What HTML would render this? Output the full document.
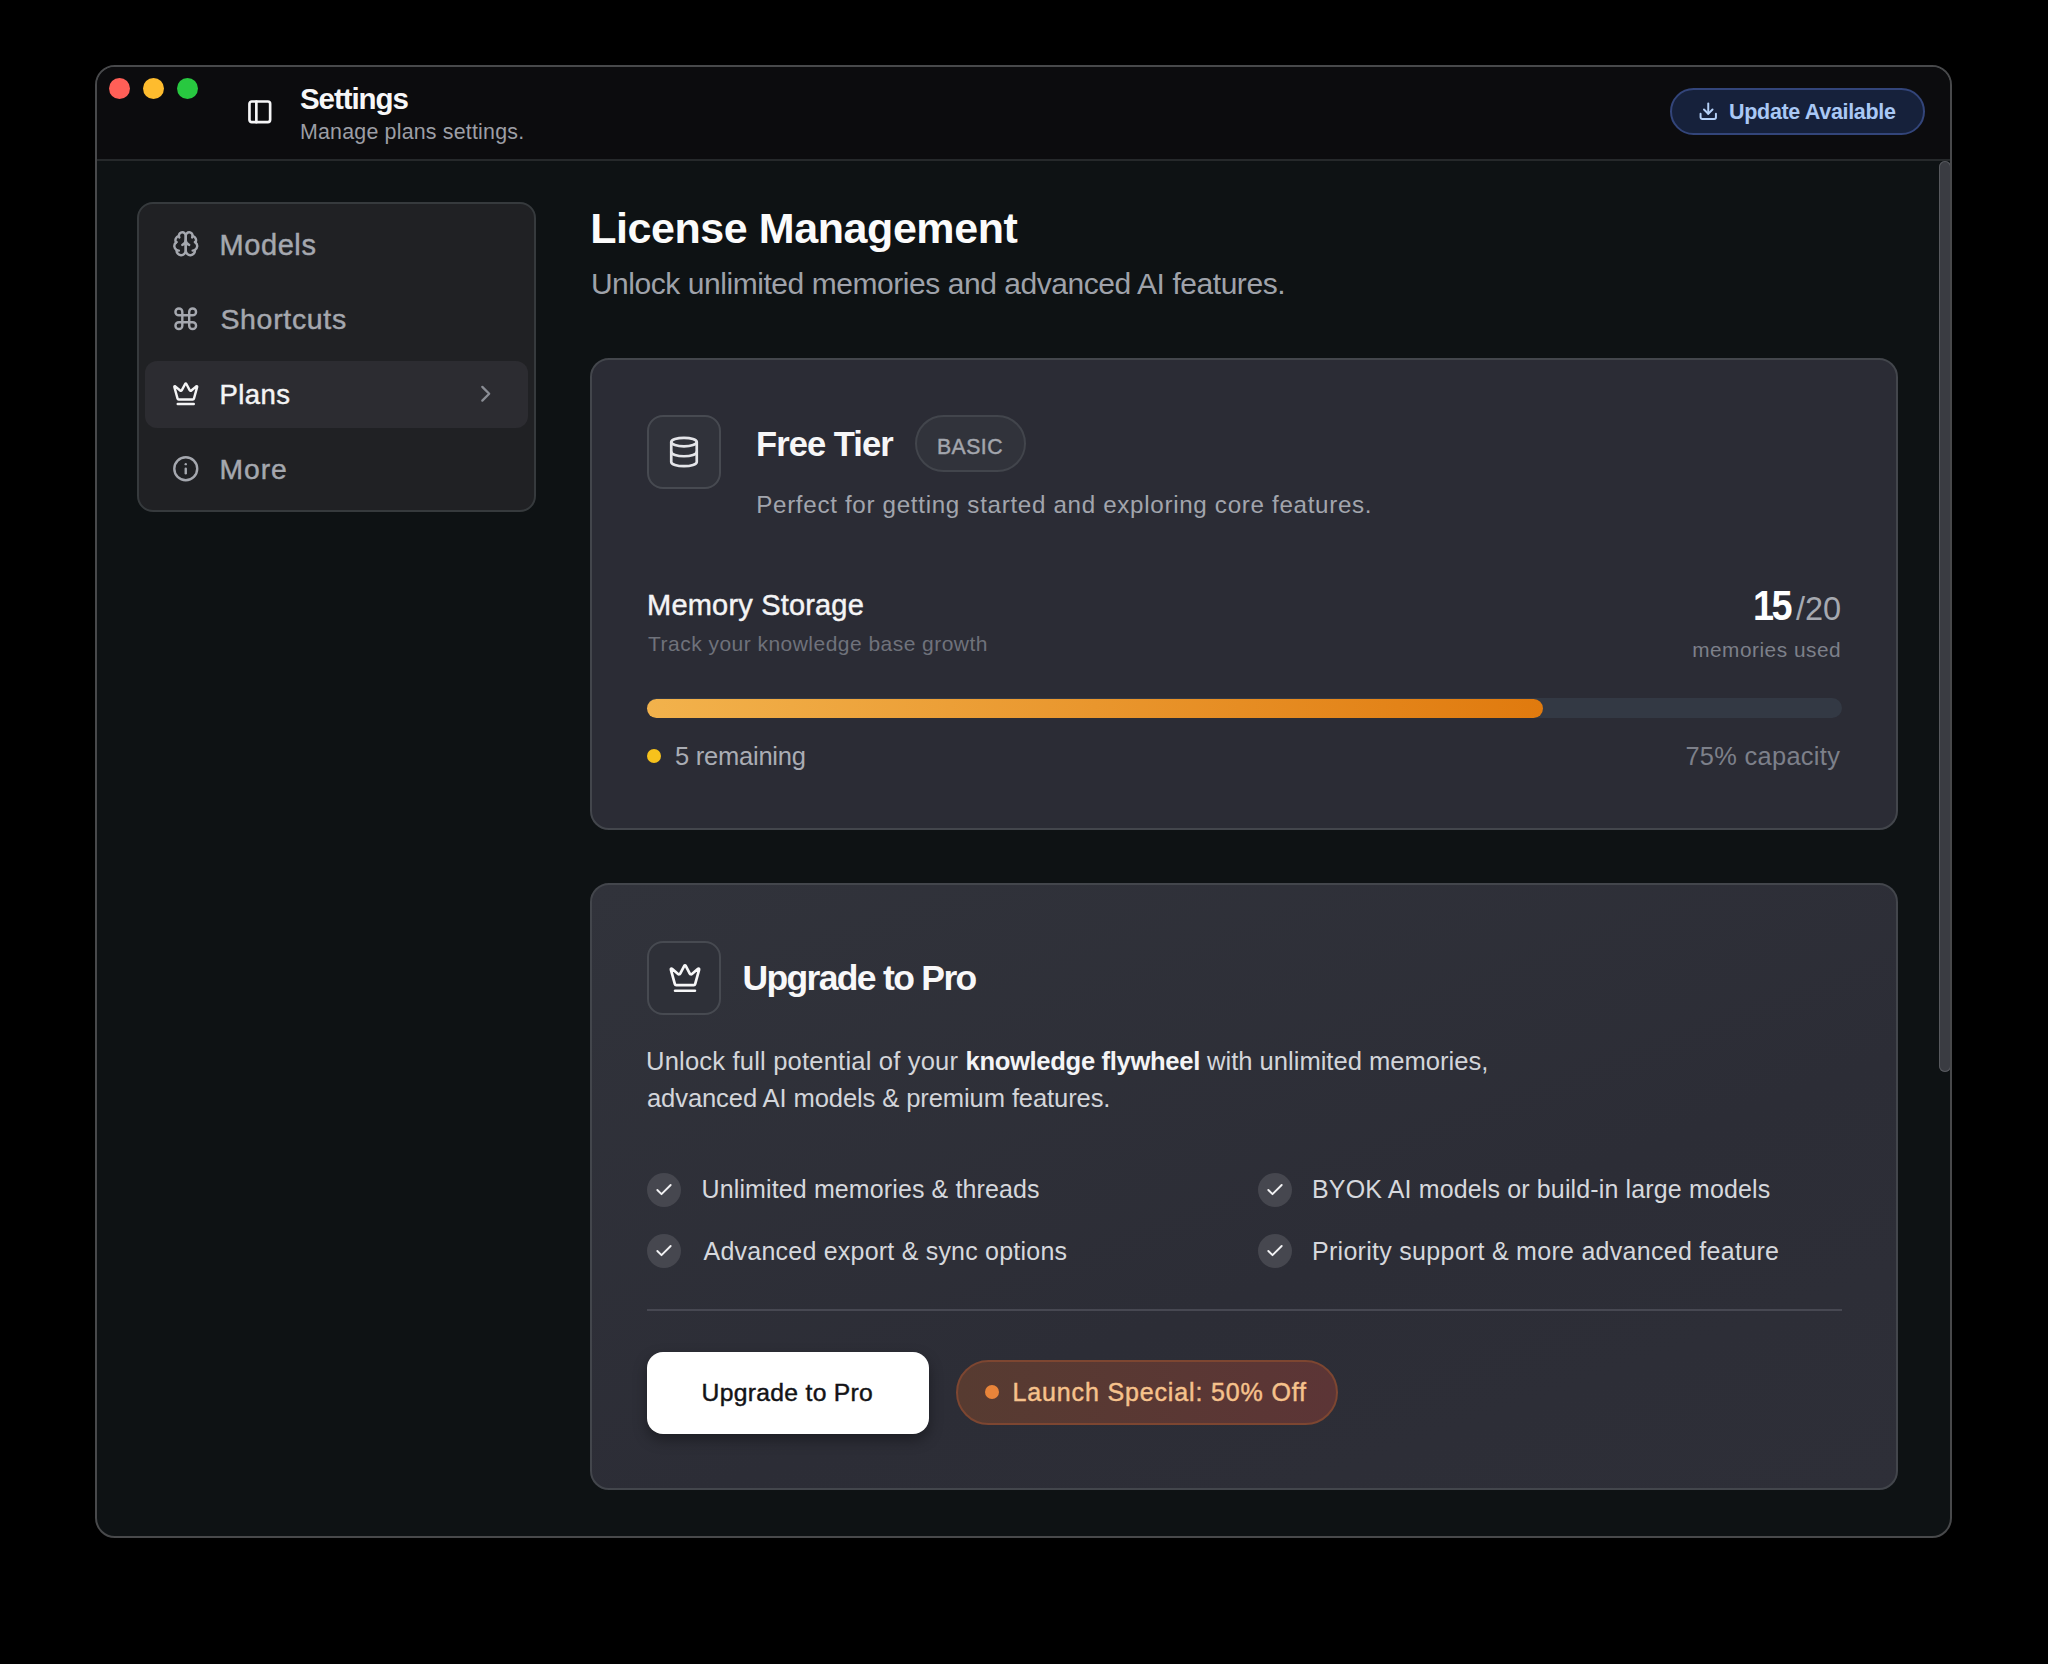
<!DOCTYPE html>
<html><head><meta charset="utf-8"><title>Settings</title><style>
html,body{margin:0;padding:0}
body{width:2048px;height:1664px;background:#000;position:relative;overflow:hidden;font-family:"Liberation Sans",sans-serif}
.t{position:absolute;line-height:1;white-space:nowrap}
.ic{position:absolute;overflow:visible}
.box{position:absolute;box-sizing:border-box}
.chk{position:absolute;width:34px;height:34px;border-radius:50%;background:#46474f}
.ui{}
</style></head>
<body>

<div class="ui">
<div class="box" style="left:95px;top:65px;width:1857px;height:1473px;border-radius:20px;border:2px solid #48494b;background:#0e1214;overflow:hidden">
  <div style="position:absolute;left:0;top:0;right:0;height:91.5px;background:#0c0c0e;border-bottom:2px solid #26292b"></div>
  <div style="position:absolute;left:1842px;top:94px;width:12px;height:911px;border-radius:6px;background:#3a3c42;box-shadow:inset 0 0 0 1px #56585d"></div>
</div>
<div class="box" style="left:108.9px;top:77.9px;width:21px;height:21px;border-radius:50%;background:#ff5f57"></div>
<div class="box" style="left:143px;top:77.9px;width:21px;height:21px;border-radius:50%;background:#febc2e"></div>
<div class="box" style="left:177px;top:77.9px;width:21px;height:21px;border-radius:50%;background:#28c840"></div>

<div class="box" style="left:1670px;top:88px;width:255px;height:47px;border-radius:24px;border:2px solid #33457a;background:#16213b"></div>

<div class="box" style="left:137px;top:201.5px;width:399px;height:310.5px;border-radius:16px;border:2px solid #363a3d;background:#202124"></div>
<div class="box" style="left:145px;top:360.5px;width:383px;height:67.5px;border-radius:12px;background:#2c2c31"></div>

<div class="box" style="left:590px;top:358px;width:1308px;height:472px;border-radius:19px;border:2px solid #43464c;background:#2b2c35"></div>
<div class="box" style="left:647px;top:415px;width:74px;height:74px;border-radius:16px;border:2px solid #474a51;background:#30323a"></div>
<div class="box" style="left:915px;top:415px;width:111px;height:57px;border-radius:29px;border:2px solid #42454c;background:#31333b"></div>
<div class="box" style="left:647px;top:698px;width:1195px;height:20px;border-radius:10px;background:#333944"></div>
<div class="box" style="left:647px;top:698.5px;width:896px;height:19px;border-radius:10px;background:linear-gradient(90deg,#f2b24c,#e07a0e)"></div>
<div class="box" style="left:646.7px;top:748.5px;width:14.6px;height:14.6px;border-radius:50%;background:#f7c21c"></div>

<div class="box" style="left:590px;top:883px;width:1308px;height:607px;border-radius:19px;border:2px solid #43464c;background:linear-gradient(160deg,#31333b 0%,#2c2d36 60%,#2e2f38 100%)"></div>
<div class="box" style="left:647px;top:940.5px;width:74px;height:74px;border-radius:16px;border:2px solid #474a51;background:#2e3038"></div>
<div class="box" style="left:647px;top:1309px;width:1195px;height:2px;background:#474852"></div>
<div class="box" style="left:647px;top:1352px;width:282px;height:82px;border-radius:16px;background:#ffffff;box-shadow:0 6px 14px rgba(0,0,0,.35)"></div>
<div class="box" style="left:956px;top:1360px;width:382px;height:65px;border-radius:33px;border:2px solid #7d4631;background:linear-gradient(90deg,#573b31,#5c3536)"></div>
<div class="box" style="left:984.5px;top:1385.4px;width:14px;height:14px;border-radius:50%;background:#e8843a"></div>
<svg class="ic" style="left:245.70px;top:97.70px;width:27.6px;height:27.6px;" viewBox="0 0 24 24" fill="none" stroke="#f6f6f7" stroke-width="2.3" stroke-linecap="round" stroke-linejoin="round"><rect width="18" height="18" x="3" y="3" rx="2"/><path d="M9 3v18"/></svg>
<svg class="ic" style="left:172.25px;top:230.25px;width:27.5px;height:27.5px;" viewBox="0 0 24 24" fill="none" stroke="#a5a8af" stroke-width="2.1" stroke-linecap="round" stroke-linejoin="round"><path d="M12 5a3 3 0 1 0-5.997.125 4 4 0 0 0-2.526 5.77 4 4 0 0 0 .556 6.588A4 4 0 1 0 12 18Z"/><path d="M12 5a3 3 0 1 1 5.997.125 4 4 0 0 1 2.526 5.77 4 4 0 0 1-.556 6.588A4 4 0 1 1 12 18Z"/><path d="M15 13a4.5 4.5 0 0 1-3-4 4.5 4.5 0 0 1-3 4"/><path d="M17.599 6.5a3 3 0 0 0 .399-1.375"/><path d="M6.003 5.125A3 3 0 0 0 6.401 6.5"/><path d="M3.477 10.896a4 4 0 0 1 .585-.396"/><path d="M19.938 10.5a4 4 0 0 1 .585.396"/><path d="M6 18a4 4 0 0 1-1.967-.516"/><path d="M19.967 17.484A4 4 0 0 1 18 18"/></svg>
<svg class="ic" style="left:172.25px;top:305.25px;width:27.5px;height:27.5px;" viewBox="0 0 24 24" fill="none" stroke="#a5a8af" stroke-width="2.1" stroke-linecap="round" stroke-linejoin="round"><path d="M15 6v12a3 3 0 1 0 3-3H6a3 3 0 1 0 3 3V6a3 3 0 1 0-3 3h12a3 3 0 1 0-3-3"/></svg>
<svg class="ic" style="left:172.25px;top:380.25px;width:27.5px;height:27.5px;" viewBox="0 0 24 24" fill="none" stroke="#f4f4f5" stroke-width="2.1" stroke-linecap="round" stroke-linejoin="round"><path d="M11.562 3.266a.5.5 0 0 1 .876 0L15.39 8.87a1 1 0 0 0 1.516.294L21.183 5.5a.5.5 0 0 1 .798.519l-2.834 10.246a1 1 0 0 1-.956.734H5.81a1 1 0 0 1-.957-.734L2.02 6.02a.5.5 0 0 1 .798-.519l4.276 3.664a1 1 0 0 0 1.516-.294z"/><path d="M5 21h14"/></svg>
<svg class="ic" style="left:172.25px;top:455.25px;width:27.5px;height:27.5px;" viewBox="0 0 24 24" fill="none" stroke="#a5a8af" stroke-width="2.1" stroke-linecap="round" stroke-linejoin="round"><circle cx="12" cy="12" r="10"/><path d="M12 16v-4"/><path d="M12 8h.01"/></svg>
<svg class="ic" style="left:472.25px;top:380.25px;width:27.5px;height:27.5px;" viewBox="0 0 24 24" fill="none" stroke="#8a8d94" stroke-width="2.0" stroke-linecap="round" stroke-linejoin="round"><path d="m9 18 6-6-6-6"/></svg>
<svg class="ic" style="left:1698.25px;top:101.25px;width:20.5px;height:20.5px;" viewBox="0 0 24 24" fill="none" stroke="#b4d0f7" stroke-width="2.3" stroke-linecap="round" stroke-linejoin="round"><path d="M21 15v4a2 2 0 0 1-2 2H5a2 2 0 0 1-2-2v-4"/><polyline points="7 10 12 15 17 10"/><line x1="12" x2="12" y1="15" y2="3"/></svg>
<svg class="ic" style="left:667.40px;top:435.40px;width:34px;height:34px;" viewBox="0 0 24 24" fill="none" stroke="#e4e5e9" stroke-width="1.9" stroke-linecap="round" stroke-linejoin="round"><ellipse cx="12" cy="5" rx="9" ry="3"/><path d="M3 5V19A9 3 0 0 0 21 19V5"/><path d="M3 12A9 3 0 0 0 21 12"/></svg>
<svg class="ic" style="left:667.60px;top:960.50px;width:34px;height:34px;" viewBox="0 0 24 24" fill="none" stroke="#f7f7f8" stroke-width="1.9" stroke-linecap="round" stroke-linejoin="round"><path d="M11.562 3.266a.5.5 0 0 1 .876 0L15.39 8.87a1 1 0 0 0 1.516.294L21.183 5.5a.5.5 0 0 1 .798.519l-2.834 10.246a1 1 0 0 1-.956.734H5.81a1 1 0 0 1-.957-.734L2.02 6.02a.5.5 0 0 1 .798-.519l4.276 3.664a1 1 0 0 0 1.516-.294z"/><path d="M5 21h14"/></svg>
<div class="chk" style="left:647.0px;top:1173.0px"></div>
<svg class="ic" style="left:654.00px;top:1180.00px;width:20px;height:20px;" viewBox="0 0 24 24" fill="none" stroke="#f2f2f4" stroke-width="2.3" stroke-linecap="round" stroke-linejoin="round"><path d="M20 6 9 17l-5-5"/></svg>
<div class="chk" style="left:647.0px;top:1234.0px"></div>
<svg class="ic" style="left:654.00px;top:1241.00px;width:20px;height:20px;" viewBox="0 0 24 24" fill="none" stroke="#f2f2f4" stroke-width="2.3" stroke-linecap="round" stroke-linejoin="round"><path d="M20 6 9 17l-5-5"/></svg>
<div class="chk" style="left:1257.7px;top:1173.0px"></div>
<svg class="ic" style="left:1264.70px;top:1180.00px;width:20px;height:20px;" viewBox="0 0 24 24" fill="none" stroke="#f2f2f4" stroke-width="2.3" stroke-linecap="round" stroke-linejoin="round"><path d="M20 6 9 17l-5-5"/></svg>
<div class="chk" style="left:1257.7px;top:1234.0px"></div>
<svg class="ic" style="left:1264.70px;top:1241.00px;width:20px;height:20px;" viewBox="0 0 24 24" fill="none" stroke="#f2f2f4" stroke-width="2.3" stroke-linecap="round" stroke-linejoin="round"><path d="M20 6 9 17l-5-5"/></svg>
</div>

<div id="settings" class="t" style="left:300.00px;top:84.21px;font-size:29.50px;letter-spacing:-1.071px;font-weight:700;color:#f7f7f8;">Settings</div>
<div id="manage" class="t" style="left:300.00px;top:122.00px;font-size:21.40px;letter-spacing:0.195px;font-weight:400;color:#9c9ea5;">Manage plans settings.</div>
<div id="update" class="t" style="left:1729.10px;top:102.00px;font-size:21.50px;letter-spacing:-0.327px;font-weight:700;color:#a9c8f5;">Update Available</div>
<div id="models" class="t" style="left:219.40px;top:230.51px;font-size:29.00px;letter-spacing:0.610px;font-weight:400;color:#a5a8af;-webkit-text-stroke:0.45px currentColor;">Models</div>
<div id="shortcuts" class="t" style="left:220.40px;top:305.41px;font-size:28.50px;letter-spacing:0.675px;font-weight:400;color:#a5a8af;-webkit-text-stroke:0.45px currentColor;">Shortcuts</div>
<div id="plans" class="t" style="left:219.40px;top:381.30px;font-size:27.50px;letter-spacing:0.450px;font-weight:400;color:#f4f4f5;-webkit-text-stroke:0.45px currentColor;">Plans</div>
<div id="more" class="t" style="left:219.40px;top:455.31px;font-size:28.30px;letter-spacing:0.999px;font-weight:400;color:#a5a8af;-webkit-text-stroke:0.45px currentColor;">More</div>
<div id="license" class="t" style="left:590.20px;top:206.90px;font-size:43.00px;letter-spacing:-0.429px;font-weight:700;color:#fbfbfb;">License Management</div>
<div id="unlock" class="t" style="left:590.90px;top:269.01px;font-size:30.00px;letter-spacing:-0.448px;font-weight:400;color:#9fa2aa;">Unlock unlimited memories and advanced AI features.</div>
<div id="freetier" class="t" style="left:756.10px;top:426.51px;font-size:34.50px;letter-spacing:-0.942px;font-weight:700;color:#f6f6f7;">Free Tier</div>
<div id="basic" class="t" style="left:936.90px;top:436.00px;font-size:21.20px;letter-spacing:0.500px;font-weight:400;color:#a3a6ad;-webkit-text-stroke:0.45px currentColor;">BASIC</div>
<div id="perfect" class="t" style="left:756.20px;top:493.41px;font-size:24.20px;letter-spacing:0.677px;font-weight:400;color:#a2a5ad;">Perfect for getting started and exploring core features.</div>
<div id="memstor" class="t" style="left:647.10px;top:590.80px;font-size:29.00px;letter-spacing:0.180px;font-weight:400;color:#f4f4f5;-webkit-text-stroke:0.45px currentColor;">Memory Storage</div>
<div id="track" class="t" style="left:648.10px;top:633.40px;font-size:21.00px;letter-spacing:0.467px;font-weight:400;color:#6f727b;">Track your knowledge base growth</div>
<div id="n15" class="t" style="left:1753.10px;top:583.81px;font-size:43.00px;letter-spacing:-3.000px;font-weight:700;color:#ffffff;transform:scaleX(0.88);transform-origin:0 0;">15</div>
<div id="n20" class="t" style="left:1796.00px;top:592.80px;font-size:32.50px;letter-spacing:0.000px;font-weight:400;color:#a6a9b0;">/20</div>
<div id="memused" class="t" style="left:1692.20px;top:639.71px;font-size:20.80px;letter-spacing:0.518px;font-weight:400;color:#7d808a;">memories used</div>
<div id="remain" class="t" style="left:674.90px;top:743.71px;font-size:25.50px;letter-spacing:-0.220px;font-weight:400;color:#aaadb4;">5 remaining</div>
<div id="capacity" class="t" style="left:1685.40px;top:743.71px;font-size:25.40px;letter-spacing:0.312px;font-weight:400;color:#7d808a;">75% capacity</div>
<div id="upgtitle" class="t" style="left:742.50px;top:961.00px;font-size:35.50px;letter-spacing:-1.669px;font-weight:700;color:#f8f8f9;">Upgrade to Pro</div>
<div id="para1" class="t" style="left:646.00px;top:1049.31px;font-size:25.60px;letter-spacing:-0.011px;font-weight:400;color:#d3d5da;"><span style="letter-spacing:0.17px">Unlock full potential of your </span><b style="color:#f4f4f6;letter-spacing:-0.33px">knowledge flywheel</b> with unlimited memories,</div>
<div id="para2" class="t" style="left:647.00px;top:1086.41px;font-size:25.60px;letter-spacing:-0.123px;font-weight:400;color:#d3d5da;">advanced AI models &amp; premium features.</div>
<div id="f1" class="t" style="left:701.60px;top:1177.21px;font-size:25.00px;letter-spacing:0.115px;font-weight:400;color:#d6d8dd;">Unlimited memories &amp; threads</div>
<div id="f2" class="t" style="left:703.60px;top:1238.50px;font-size:25.00px;letter-spacing:0.217px;font-weight:400;color:#d6d8dd;">Advanced export &amp; sync options</div>
<div id="f3" class="t" style="left:1312.00px;top:1177.21px;font-size:25.00px;letter-spacing:0.139px;font-weight:400;color:#d6d8dd;">BYOK AI models or build-in large models</div>
<div id="f4" class="t" style="left:1312.00px;top:1238.50px;font-size:25.00px;letter-spacing:0.285px;font-weight:400;color:#d6d8dd;">Priority support &amp; more advanced feature</div>
<div id="btn" class="t" style="left:701.60px;top:1380.81px;font-size:24.70px;letter-spacing:0.294px;font-weight:400;color:#131316;-webkit-text-stroke:0.45px currentColor;">Upgrade to Pro</div>
<div id="launch" class="t" style="left:1012.50px;top:1380.21px;font-size:25.00px;letter-spacing:0.855px;font-weight:400;color:#f6c28c;-webkit-text-stroke:0.45px currentColor;">Launch Special: 50% Off</div>
</body></html>
